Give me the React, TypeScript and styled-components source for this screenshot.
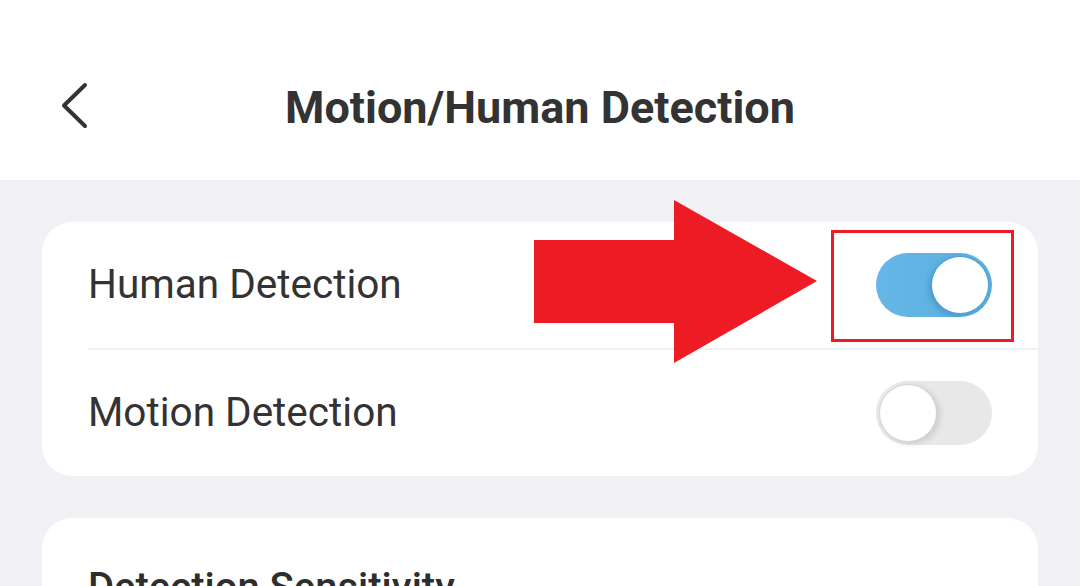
import styled, { createGlobalStyle } from 'styled-components';

const GlobalStyle = createGlobalStyle`
  html, body {
    margin: 0;
    padding: 0;
    background: #f0f0f5;
    font-family: Roboto, 'Liberation Sans', sans-serif;
    color: #333333;
  }
`;

const Page = styled.div`
  width: 1080px;
  height: 586px;
  overflow: hidden;
  background: #f0f0f5;
`;

const Header = styled.header`
  height: 180px;
  box-sizing: border-box;
  padding-top: 34px;
  background: #ffffff;
  display: grid;
  grid-template-columns: 1fr auto 1fr;
  align-items: center;
`;

const BackButton = styled.button`
  justify-self: start;
  margin-left: 60px;
  padding: 0;
  border: none;
  background: none;
  display: flex;
  color: #333333;
`;

const Title = styled.h1`
  margin: 0;
  font-size: 45px;
  font-weight: 700;
  color: #333333;
`;

const Main = styled.main`
  padding: 42px;
  display: flex;
  flex-direction: column;
  gap: 42px;
`;

const Card = styled.section`
  background: #ffffff;
  border-radius: 30px;
`;

const Row = styled.div<{ $divider?: boolean }>`
  position: relative;
  height: 126px;
  margin-left: 46px;
  padding-right: 46px;
  display: flex;
  align-items: center;
  justify-content: space-between;
  border-bottom: ${(p) => (p.$divider ? '2px solid #f1f1f3' : 'none')};
`;

const Label = styled.span`
  font-size: 40.5px;
  font-weight: 400;
  color: #333333;
  margin-top: -2px;
`;

const SectionLabel = styled.div`
  padding: 46px 46px 0;
  font-size: 40px;
  line-height: 48px;
  font-weight: 500;
  color: #2e2e2e;
`;

const SectionBody = styled.div`
  height: 80px;
`;

const ToggleWrap = styled.div`
  position: relative;
  display: flex;
`;

const Track = styled.div<{ $on: boolean }>`
  width: 116px;
  height: 64px;
  border-radius: 32px;
  box-sizing: border-box;
  padding: 3px;
  display: flex;
  justify-content: ${(p) => (p.$on ? 'flex-end' : 'flex-start')};
  background: ${(p) =>
    p.$on ? 'linear-gradient(90deg, #64b7e6, #5aaedf)' : '#e8e8e9'};
`;

const Knob = styled.div<{ $on: boolean }>`
  width: 58px;
  height: 58px;
  border-radius: 50%;
  box-sizing: border-box;
  background: #ffffff;
  border: 1.5px solid ${(p) => (p.$on ? '#4f9fd0' : '#d4d4d4')};
  box-shadow: ${(p) =>
    p.$on ? '-2px 2px 5px rgba(40, 110, 160, 0.35)' : '3px 2px 6px rgba(0, 0, 0, 0.12)'};
`;

const Highlight = styled.div`
  position: absolute;
  left: -45px;
  right: -22px;
  top: -23px;
  bottom: -25px;
  border: 3px solid #ed1c24;
  pointer-events: none;
`;

const Arrow = styled.svg`
  position: absolute;
  left: 446px;
  top: -22px;
`;

function Toggle({ on, highlight }: { on: boolean; highlight?: boolean }) {
  return (
    <ToggleWrap>
      <Track $on={on}>
        <Knob $on={on} />
      </Track>
      {highlight && <Highlight />}
    </ToggleWrap>
  );
}

export default function App() {
  return (
    <Page>
      <GlobalStyle />
      <Header>
        <BackButton aria-label="Back">
          <svg width="30" height="50" viewBox="0 0 30 50">
            <polyline
              points="25,3 4,23.5 25,44"
              fill="none"
              stroke="#333333"
              strokeWidth="4"
              strokeLinecap="round"
              strokeLinejoin="round"
            />
          </svg>
        </BackButton>
        <Title>Motion/Human Detection</Title>
        <div />
      </Header>
      <Main>
        <Card>
          <Row $divider>
            <Label>Human Detection</Label>
            <Arrow width="284" height="164" viewBox="0 0 284 164">
              <polygon points="0,40 140,40 140,0 283,81 140,163 140,123 0,123" fill="#ed1c24" />
            </Arrow>
            <Toggle on highlight />
          </Row>
          <Row>
            <Label>Motion Detection</Label>
            <Toggle on={false} />
          </Row>
        </Card>
        <Card>
          <SectionLabel>Detection Sensitivity</SectionLabel>
          <SectionBody />
        </Card>
      </Main>
    </Page>
  );
}
